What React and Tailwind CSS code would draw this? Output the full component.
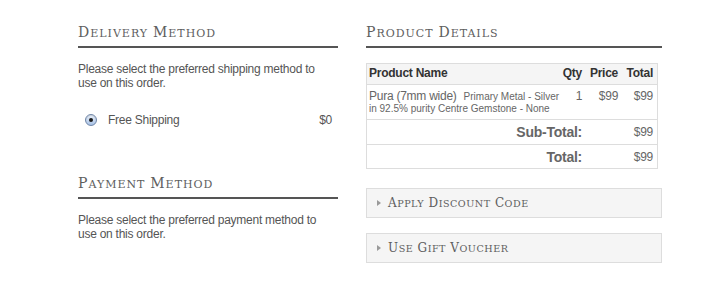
import React from "react";

const SC = ({ words, big = "text-[14px]", small = "text-[11px]" }) => (
  <>
    {words.map((w, i) => (
      <React.Fragment key={i}>
        {i > 0 ? " " : ""}
        <span className={big}>{w[0]}</span>
        <span className={small}>{w.slice(1).toUpperCase()}</span>
      </React.Fragment>
    ))}
  </>
);

const serif = { fontFamily: '"DejaVu Serif", serif' };

const Heading = ({ words, className = "" }) => (
  <div
    className={
      "h-[25px] border-b-2 border-[#555] pb-[5px] leading-[18px] text-[#5e5e5e] tracking-[1px] whitespace-nowrap " +
      className
    }
    style={serif}
  >
    <SC words={words} />
  </div>
);

const Toggle = ({ words, className = "" }) => (
  <div
    className={
      "flex h-[30px] w-[296px] items-center border border-[#ddd] bg-[#f5f5f5] pl-[10px] " +
      className
    }
  >
    <span className="h-0 w-0 border-y-[3px] border-l-[4px] border-y-transparent border-l-[#9a9a9a]" />
    <span
      className="ml-[7px] leading-[14px] text-[#5e5e5e] tracking-[0.5px] whitespace-nowrap"
      style={serif}
    >
      <SC words={words} big="text-[12px]" small="text-[9.6px]" />
    </span>
  </div>
);

export default function App() {
  return (
    <div
      className="h-[288px] w-[724px] bg-white pl-[78px] pt-[23px] text-[12px] tracking-[-0.25px] text-[#555]"
      style={{ fontFamily: '"Liberation Sans", Arial, sans-serif' }}
    >
      <div className="flex">
        {/* Left column */}
        <div className="flex w-[260px] flex-col">
          <Heading words={["Delivery", "Method"]} />
          <p className="mt-[14px] w-[248px] leading-[14px]">
            Please select the preferred shipping method to use on this order.
          </p>
          <div className="mt-[23px] flex h-[14px] items-center pl-[7px] pr-[6px] leading-[14px]">
            <span className="flex h-[12px] w-[12px] items-center justify-center rounded-full border border-[#6f86a8] bg-[linear-gradient(#eef4fc,#a7c1e6)] shadow-[inset_0_1px_1px_rgba(0,0,0,0.15)]">
              <span className="h-[4px] w-[4px] rounded-full bg-[#1a1a1a]" />
            </span>
            <span className="ml-[11px]">Free Shipping</span>
            <span className="ml-auto">$0</span>
          </div>
          <Heading words={["Payment", "Method"]} className="mt-[47px]" />
          <p className="mt-[14px] w-[248px] leading-[14px]">
            Please select the preferred payment method to use on this order.
          </p>
        </div>

        {/* Right column */}
        <div className="ml-[28px] flex w-[296px] flex-col">
          <Heading words={["Product", "Details"]} />
          <div className="mt-[15px] w-[292px] border border-[#ddd]">
            <div className="flex h-[21px] border-b border-[#ddd] bg-[#f5f5f5] pt-[2px] font-bold leading-[14px] text-[#333]">
              <div className="flex-1 pl-[2px]">Product Name</div>
              <div className="w-[27px] pr-[4px] text-right">Qty</div>
              <div className="w-[36px] pr-[4px] text-right">Price</div>
              <div className="w-[35px] pr-[4px] text-right">Total</div>
            </div>
            <div className="flex h-[35px] border-b border-[#ddd] pt-[5px] leading-[12px] text-[#666]">
              <div className="flex-1 pl-[2px] whitespace-nowrap">
                <div>
                  <span className="text-[12px]">Pura (7mm wide)</span>
                  <span className="ml-[7px] text-[10px] tracking-normal">Primary Metal - Silver</span>
                </div>
                <div className="text-[10px] tracking-normal">in 92.5% purity Centre Gemstone - None</div>
              </div>
              <div className="w-[27px] pr-[4px] text-right">1</div>
              <div className="w-[36px] pr-[4px] text-right">$99</div>
              <div className="w-[35px] pr-[4px] text-right">$99</div>
            </div>
            <div className="flex h-[25px] border-b border-[#ddd] pt-[4px] leading-[16px] text-[#666]">
              <div className="flex-1 pr-[4px] text-right text-[14px] font-bold">Sub-Total:</div>
              <div className="w-[71px] pr-[4px] text-right">$99</div>
            </div>
            <div className="flex h-[23px] pt-[4px] leading-[16px] text-[#666]">
              <div className="flex-1 pr-[4px] text-right text-[14px] font-bold">Total:</div>
              <div className="w-[71px] pr-[4px] text-right">$99</div>
            </div>
          </div>
          <Toggle words={["Apply", "Discount", "Code"]} className="mt-[19px]" />
          <Toggle words={["Use", "Gift", "Voucher"]} className="mt-[15px]" />
        </div>
      </div>
    </div>
  );
}
